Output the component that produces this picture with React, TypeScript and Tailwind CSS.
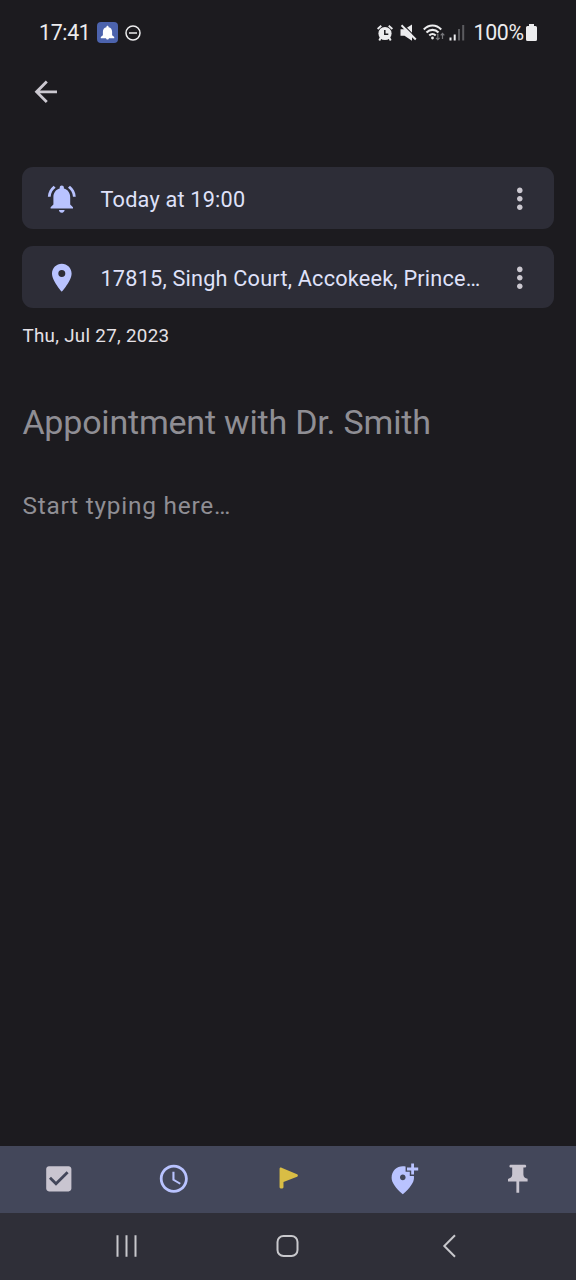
import React from 'react';

interface IconProps {
  d: string;
  className?: string;
}

const paths = {
  back: 'M20 11H7.83l5.59-5.59L12 4l-8 8 8 8 1.41-1.41L7.83 13H20v-2z',
  bellActive:
    'M7.58 4.08L6.15 2.65C3.75 4.48 2.17 7.3 2.03 10.5h2c.15-2.65 1.51-4.97 3.55-6.42zm12.39 6.42h2c-.15-3.2-1.73-6.02-4.12-7.85l-1.42 1.43c2.02 1.45 3.39 3.77 3.54 6.42zM18 11c0-3.07-1.64-5.64-4.5-6.32V4c0-.83-.67-1.5-1.5-1.5s-1.5.67-1.5 1.5v.68C7.63 5.36 6 7.92 6 11v5l-2 2v1h16v-1l-2-2v-5zm-6 11c.14 0 .27-.01.4-.04.65-.14 1.18-.58 1.44-1.18.1-.24.15-.5.15-.78h-4c.01 1.1.9 2 2.01 2z',
  bell: 'M12 22c1.1 0 2-.9 2-2h-4c0 1.1.89 2 2 2zm6.500-6v-5c0-3.070-1.640-5.640-5-6.320V4c0-.83-.67-1.500-1.500-1.500s-1.500.67-1.500 1.500v.68C7.130 5.360 5.500 7.920 5.500 11v5L2.500 18.500V20h19v-1.500l-3-2.500z',
  place:
    'M12 2C8.13 2 5 5.13 5 9c0 5.25 7 13 7 13s7-7.75 7-13c0-3.87-3.13-7-7-7zm0 9.5a2.5 2.5 0 0 1 0-5 2.5 2.5 0 0 1 0 5z',
  more: 'M12 8c1.1 0 2-.9 2-2s-.9-2-2-2-2 .9-2 2 .9 2 2 2zm0 2c-1.1 0-2 .9-2 2s.9 2 2 2 2-.9 2-2-.9-2-2-2zm0 6c-1.1 0-2 .9-2 2s.9 2 2 2 2-.9 2-2-.9-2-2-2z',
  checkbox:
    'M19 3H5c-1.11 0-2 .9-2 2v14c0 1.1.89 2 2 2h14c1.11 0 2-.9 2-2V5c0-1.1-.89-2-2-2zm-9 14l-5-5 1.41-1.41L10 14.17l7.59-7.59L19 8l-9 9z',
  clock:
    'M11.99 2C6.47 2 2 6.48 2 12s4.47 10 9.99 10C17.52 22 22 17.52 22 12S17.52 2 11.99 2zM12 20c-4.42 0-8-3.58-8-8s3.58-8 8-8 8 3.58 8 8-3.58 8-8 8zm.5-13H11v6l5.25 3.15.75-1.23-4.5-2.67z',
  flag: 'M5.400 5c0-.8.7-1.200 1.400-.9l11.100 4.600c.8.35.8 1.450 0 1.800L8.200 14.200V18c0 1.300-2.800 1.300-2.800 0z',
  addPlace:
    'M20 1v3h3v2h-3v3h-2V6h-3V4h3V1h2zM12 13c1.1 0 2-.9 2-2s-.9-2-2-2-2 .9-2 2 .9 2 2 2zM14 3.25V7h3v3h2.920c.05.39.08.79.08 1.200 0 3.320-2.670 7.250-8 11.800-5.330-4.550-8-8.480-8-11.800C4 6.220 7.800 3 12 3c.68 0 1.350.08 2 .25z',
  pin: 'M16 9V4h1c.55 0 1-.45 1-1s-.45-1-1-1H7c-.55 0-1 .45-1 1s.45 1 1 1h1v5c0 1.660-1.340 3-3 3v2h6v8h2v-8h6v-2c-1.660 0-3-1.340-3-3z',
};

function Icon({ d, className = 'size-[33.6px]' }: IconProps) {
  return (
    <svg viewBox="0 0 24 24" fill="currentColor" fillRule="evenodd" className={`shrink-0 ${className}`}>
      <path d={d} />
    </svg>
  );
}

function StatusBar() {
  return (
    <header className="flex h-16 items-center justify-between pt-px pr-[39px] pl-[39px] text-[21.300px] tracking-[-0.3px] text-[#ececee]">
      <div className="flex items-center">
        <span className="w-[58px]">17:41</span>
        <span className="flex size-[21px] items-center justify-center rounded-[4px] bg-[#4c63ad] text-white">
          <Icon d={paths.bell} className="size-[17px]" />
        </span>
        <svg viewBox="0 0 16 16" fill="none" stroke="currentColor" strokeWidth="1.5" className="ml-[6.500px] size-4">
          <circle cx="8" cy="8" r="7" />
          <path d="M4 8h8" />
        </svg>
      </div>
      <div className="flex items-center">
        {/* Alarm */}
        <svg viewBox="0 0 16 16" className="size-4">
          <circle cx="8" cy="8.500" r="6.600" fill="currentColor" />
          <path d="M.6 3.900 4.300.8M15.400 3.900 11.700.8M3.800 12.500 2.300 15.500M12.200 12.500l1.500 3" stroke="currentColor" strokeWidth="1.900" />
          <path d="M7.800 5v4.200h3.500" fill="none" stroke="#1c1b1f" strokeWidth="1.500" />
        </svg>
        {/* Muted */}
        <svg viewBox="0 0 17 17" className="ml-[7.500px] size-[17px]">
          <path d="M.5 5.300v6.400h4L12 16.800V.5L4.500 5.300z" fill="currentColor" />
          <path d="M3 .5 17.300 14.800" stroke="#1c1b1f" strokeWidth="1.200" />
          <path d="M1.500 1.200 15.800 15.500" stroke="currentColor" strokeWidth="2" />
        </svg>
        {/* Wi-Fi */}
        <svg viewBox="0 0 23 17" fill="none" stroke="currentColor" className="ml-[6px] h-[17px] w-[23px]">
          <path d="M.8 5.400c5-5.200 12.400-5.200 17.400 0M3.500 8.600c3.500-3.600 8.500-3.600 12 0M6.300 11.500c2-2 4.400-2 6.400 0" strokeWidth="2.100" />
          <circle cx="9.500" cy="14" r="1.400" fill="currentColor" stroke="none" />
          <path d="M14.800 9.700v6M13 13.800l1.800 1.900 1.800-1.900M19.500 15v-5.500M17.700 11.300l1.800-1.900 1.800 1.900" stroke="#77777b" strokeWidth="1.200" />
        </svg>
        {/* Signal */}
        <svg viewBox="0 0 16 17" className="ml-[3px] h-[17px] w-4">
          <path d="M.5 13.500h2V16.500h-2zM4.700 10.500h2v6h-2z" fill="currentColor" />
          <path d="M9 5h2v11.500H9zM13.200 1h2v15.500h-2z" fill="#5b5b5f" />
        </svg>
        <span className="ml-[8.500px] w-[52.500px] whitespace-nowrap">100%</span>
        <svg viewBox="0 0 11 17" fill="currentColor" className="h-[17px] w-[11px]">
          <path d="M3 0h5v2h1.500Q11 2 11 3.500v12Q11 17 9.500 17h-8Q0 17 0 15.500v-12Q0 2 1.500 2H3z" />
        </svg>
      </div>
    </header>
  );
}

function InfoCard({ icon, children }: { icon: string; children: React.ReactNode }) {
  return (
    <div className="flex h-[61.500px] items-center rounded-[11px] bg-[#2d2d37] pt-px pr-[17px] pl-[22.500px]">
      <span className="text-[#b9c3ff]">
        <Icon d={icon} />
      </span>
      <p className="ml-[22px] min-w-0 flex-1 truncate pt-[3px] text-[21.700px] tracking-[0.2px] text-[#dfe1f9]">{children}</p>
      <button className="text-[#cbc8d0]">
        <Icon d={paths.more} />
      </button>
    </div>
  );
}

const tools = [
  { name: 'checkbox', d: paths.checkbox, color: 'text-[#c9c5d0]' },
  { name: 'reminder', d: paths.clock, color: 'text-[#b9c3ff]' },
  { name: 'priority', d: paths.flag, color: 'text-[#d9bd45]' },
  { name: 'place', d: paths.addPlace, color: 'text-[#b9c3ff]' },
  { name: 'pin', d: paths.pin, color: 'text-[#c9c5d0]' },
];

export default function App() {
  return (
    <div className="flex h-[1280px] w-[576px] flex-col bg-[#1c1b1f] font-[Roboto,sans-serif]">
      <StatusBar />

      <div className="flex h-[103.400px] items-start pt-[11px] pl-[29px] text-[#cbc8d0]">
        <button>
          <Icon d={paths.back} />
        </button>
      </div>

      <main className="flex flex-1 flex-col px-[22.400px]">
        <div className="flex flex-col gap-[17.500px]">
          <InfoCard icon={paths.bellActive}>Today at 19:00</InfoCard>
          <InfoCard icon={paths.place}>17815, Singh Court, Accokeek, Prince…</InfoCard>
        </div>
        <p className="mt-[14px] text-[18.800px] leading-7 tracking-[0.3px] text-[#e4e1e6]">Thu, Jul 27, 2023</p>
        <h1 className="mt-[50px] text-[34px] leading-[44px] tracking-[-0.2px] text-[#8f8e94]">Appointment with Dr. Smith</h1>
        <p className="mt-[46px] text-[24.400px] leading-8 tracking-[0.78px] text-[#8f8e94]">Start typing here…</p>
      </main>

      <div className="flex h-[67.500px] items-center justify-between bg-[#43475a] pr-[41px] pl-[41.700px]">
        {tools.map((tool) => (
          <button key={tool.name} className={tool.color}>
            <Icon d={tool.d} />
          </button>
        ))}
      </div>

      {/* System navigation */}
      <nav className="flex h-[67px] items-center justify-between bg-[#2f2f38] pr-[115px] pb-px pl-[114.500px] text-[#c8c8cc]">
        <svg viewBox="0 0 24 24" fill="none" stroke="currentColor" strokeWidth="2" className="size-6">
          <path d="M2.500 1.300v21.400M11.500 1.300v21.400M20.500 1.300v21.400" />
        </svg>
        <svg viewBox="0 0 24 24" fill="none" stroke="currentColor" strokeWidth="2" className="size-6">
          <rect x="1.500" y="2" width="20" height="20" rx="6" />
        </svg>
        <svg viewBox="0 0 24 24" fill="none" stroke="currentColor" strokeWidth="2" className="size-6">
          <path d="M18 1.300 7.300 12 18 22.700" />
        </svg>
      </nav>
    </div>
  );
}
